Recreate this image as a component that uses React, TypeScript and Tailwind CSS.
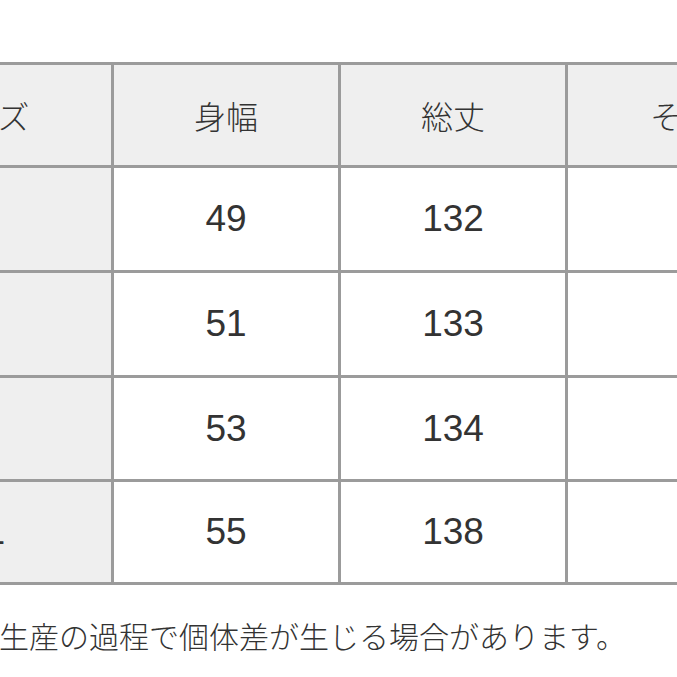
const header = ['サイズ', '身幅', '総丈', 'その他'];

const rows = [
  { size: 'S', width: '49', length: '132' },
  { size: 'M', width: '51', length: '133' },
  { size: 'L', width: '53', length: '134' },
  { size: 'XL', width: '55', length: '138' },
];

const font = { fontFamily: '"Noto Sans CJK JP", "Noto Sans", sans-serif' };
const num = { fontFamily: '"Liberation Sans", Arial, sans-serif' };

export default function App() {
  return (
    <div className="w-[677px] h-[677px] overflow-hidden bg-white text-[#333]" style={font}>
      <div className="pt-[62px] ml-[-150px]">
        <div className="grid grid-cols-[258px_224px_224px_260px] grid-rows-[100px_102px_102px_101px_100px] gap-[3px] p-[3px] bg-[#9b9b9b] w-max">
          {header.map((h) => (
            <div key={h} className="flex items-center justify-center bg-[#efefef] text-[32px] font-light">
              {h}
            </div>
          ))}
          {rows.map((r) => (
            <>
              <div key={r.size} className="flex items-center justify-center bg-[#efefef] text-[37px]" style={num}>
                {r.size}
              </div>
              <div className="flex items-center justify-center bg-white text-[37px]" style={num}>
                {r.width}
              </div>
              <div className="flex items-center justify-center bg-white text-[37px]" style={num}>
                {r.length}
              </div>
              <div className="bg-white" />
            </>
          ))}
        </div>
      </div>
      <p className="mt-[28px] ml-[-1px] text-[30px] leading-[45px] font-light whitespace-nowrap">
        生産の過程で個体差が生じる場合があります。
      </p>
    </div>
  );
}
